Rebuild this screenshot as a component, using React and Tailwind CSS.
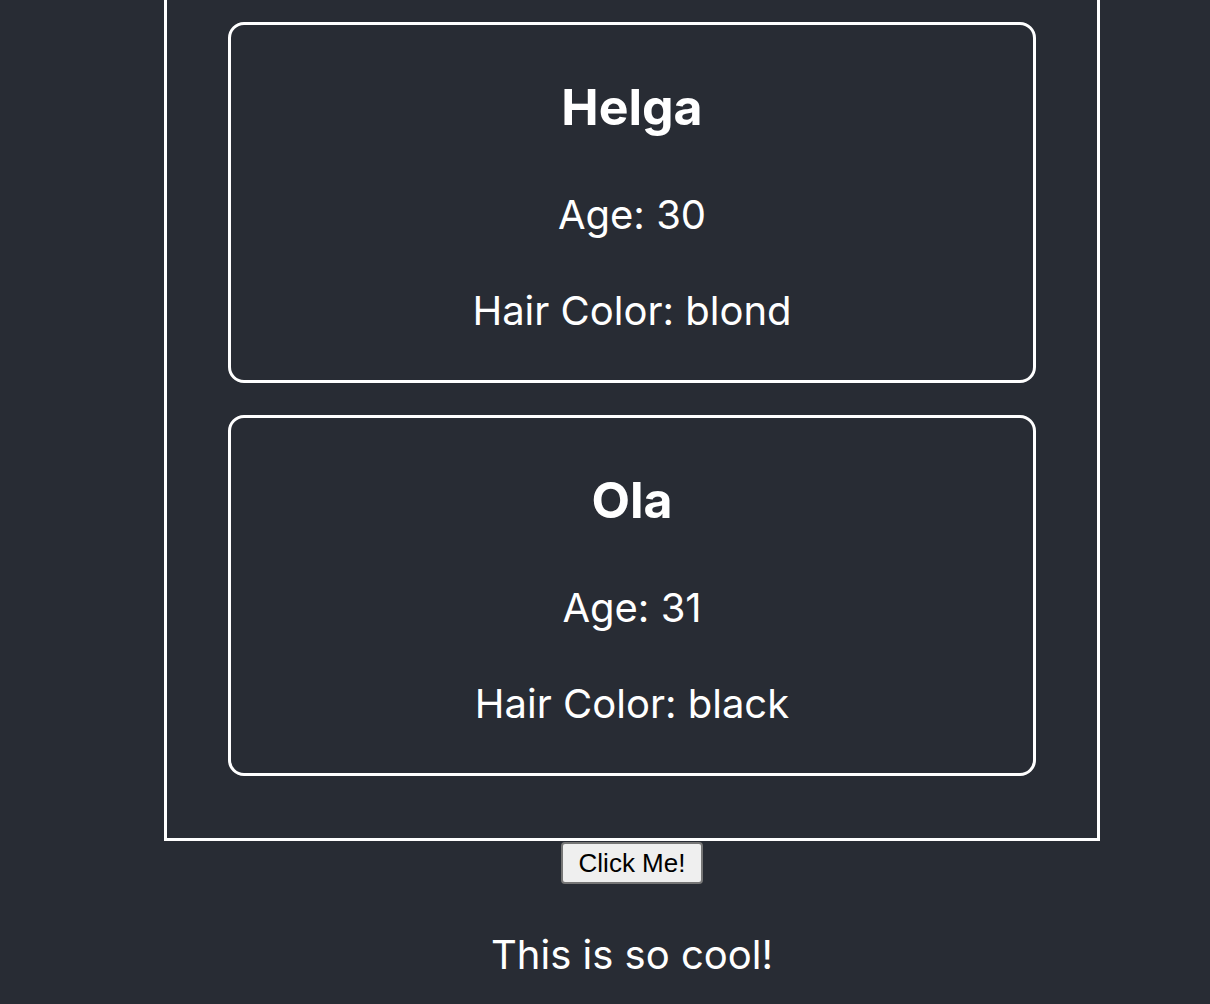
export default function App() {
  const people = [
    { name: 'Helga', age: 30, hair: 'blond' },
    { name: 'Ola', age: 31, hair: 'black' },
  ];

  return (
    <div className="min-h-screen h-[1004px] overflow-hidden bg-[#282c34] text-white flex flex-col items-center pl-[54px] font-['Inter',sans-serif]">
      <div className="w-[936px] -mt-[40px] border-[3px] border-white px-[61px] pt-[59px] pb-[62px] flex flex-col gap-[32px]">
        {people.map((p) => (
          <div
            key={p.name}
            className="h-[361px] border-[3px] border-white rounded-[16px] flex flex-col items-center pt-[57px]"
          >
            <h2 className="text-[50px] leading-[50px] font-bold">{p.name}</h2>
            <p className="mt-[63px] text-[40px] leading-[40px]">Age: {p.age}</p>
            <p className="mt-[56px] text-[40px] leading-[40px]">Hair Color: {p.hair}</p>
          </div>
        ))}
      </div>
      <button className="mt-[1px] w-[142px] h-[42px] bg-[#efefef] border-2 border-[#767676] rounded-[4px] text-black text-[26px] leading-none font-['Liberation_Sans',Arial,sans-serif]">
        Click Me!
      </button>
      <p className="mt-[51px] text-[40px] leading-[40px]">This is so cool!</p>
    </div>
  );
}
